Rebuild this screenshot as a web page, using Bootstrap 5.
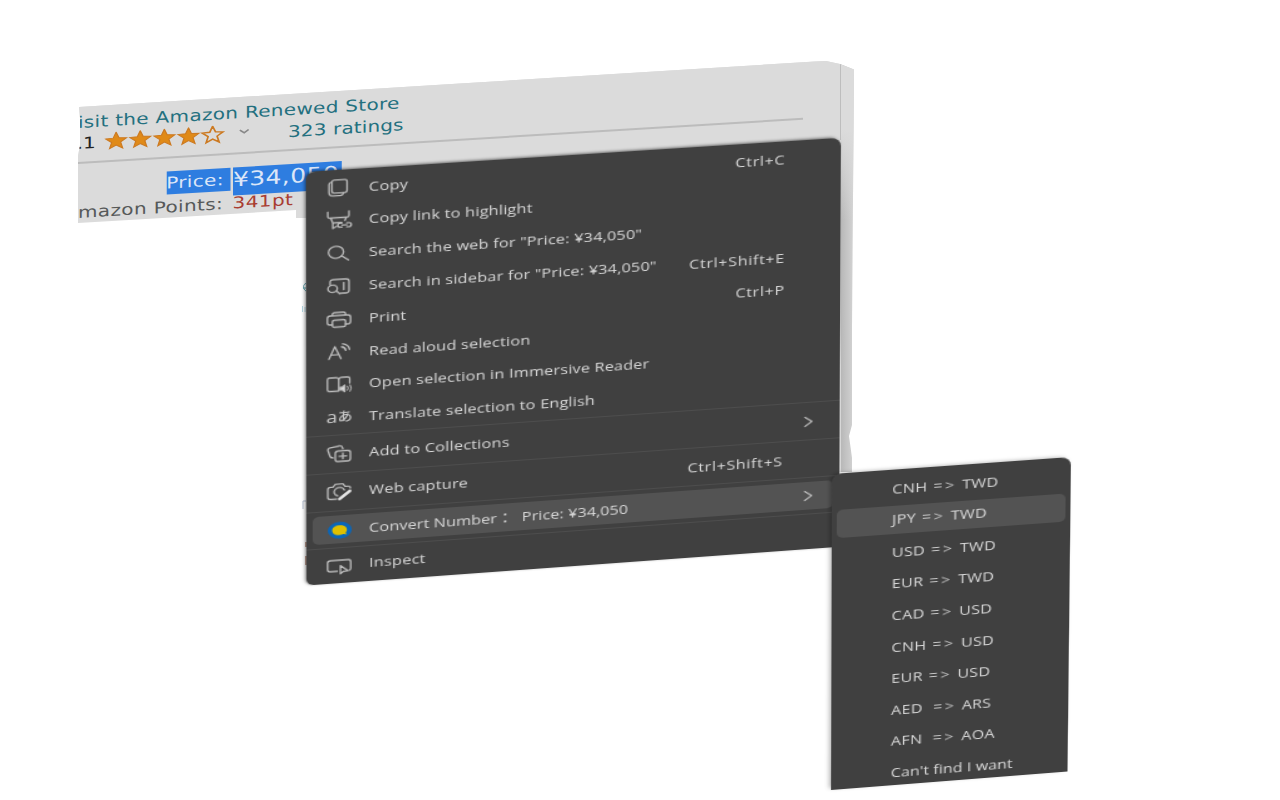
<!DOCTYPE html>
<html lang="en">
<head>
<meta charset="utf-8">
<meta name="viewport" content="width=device-width, initial-scale=1">
<title>Convert Number context menu</title>
<link href="https://cdn.jsdelivr.net/npm/bootstrap@5.3.0/dist/css/bootstrap.min.css" rel="stylesheet">
<style>
body{width:1280px;height:800px;overflow:hidden;background:#fff;font-family:"Open Sans","Noto Sans","Noto Sans CJK JP",sans-serif}
.stage{width:1280px;height:800px}
.sheet{inset:0;background:linear-gradient(#dbdbdb 130px,rgba(219,219,219,0) 220px),linear-gradient(90deg,transparent 841px,rgba(0,0,0,.16) 841px,rgba(0,0,0,.03) 854px),#dbdbdb;
 clip-path:polygon(79px 107px,460px 83.5px,815px 61.5px,826px 61px,840px 64px,854px 69.5px,852px 330px,852px 425px,849px 436px,852px 458px,852px 472px,800px 472px,800px 300px,310px 300px,310px 218px,296px 218px,296px 210px,78px 223px,78px 156px,80px 145px,80px 118px)}
.edge-line{left:840px;top:60px;width:1px;height:80px;background:#bdbdbd}
.tilted{transform-origin:0 0}
.product{left:78px;top:107px;width:582px;transform:matrix(1.25,-.07625,0,1,0,0);font:16px/22px "DejaVu Sans",sans-serif;color:#565959}
.teal{color:#23707f}
.line-store{height:26px;line-height:31px;letter-spacing:.24px}
.line-rate{height:22px}
.digit{margin-left:-1px;width:22px;color:#222}
.ratings{margin-left:31px;letter-spacing:.1px;padding-top:1px}
.rule{height:1.5px;background:#bcbcbc;width:580px;margin-top:7px}
.sel{background:#2e7de0;color:#dce6f8}
.line-price{margin-top:13.500px;height:29px}
.price-tag{width:51px;height:23px;margin-left:70.500px;line-height:24px;letter-spacing:.3px}
.price-val{width:87px;height:28px;margin-left:2.500px;line-height:25px;font-size:20px;letter-spacing:.3px}
.line-points{margin-top:-4px;letter-spacing:.3px}
.points{color:#a93d32;margin-left:7.500px}
.ctx{background:#404040;color:#d8d8d8;font-size:13px}
.ctx-main{left:306px;top:171.500px;width:428px;height:413px;border-radius:8px 8px 0 6px;padding-top:2px;box-shadow:-1.500px -1px 3px -.5px rgba(0,0,0,.5);
 transform:matrix3d(1.26433,-.080823,0,.00002675,.001216,1.00596,0,.00001147,0,0,1,0,0,0,0,1)}
.ctx-sub{left:832px;top:474px;width:192px;height:316px;border-radius:8px 8px 0 0;padding-top:2.800px;box-shadow:-2px -1px 4px -1px rgba(0,0,0,.35);
 transform:matrix3d(1.25151,-.08902,0,.000028104,-.003198,1.01066,0,.000033706,0,0,1,0,0,0,0,1)}
.item{height:32.800px;padding:0 45px 0 15.800px;white-space:pre}
.item svg{width:20px;height:20px;flex:none;fill:none;stroke:#bcbcbc;stroke-width:1.300;stroke-linejoin:round;stroke-linecap:round;overflow:visible;margin-top:-1.500px}
.item .caption{margin-left:14px;letter-spacing:.16px}
.item .keys{letter-spacing:.52px;padding-top:1px}
.item .keys-capture{margin-right:1px}
.item .chev{width:8px;height:12px;margin-right:-24px;margin-top:0}
.split{height:1px;background:#4d4d4d}
.tall{height:37px}
.lit{background:#535353;border-radius:5px;margin:4px 5px;height:28px;padding-left:10.800px;padding-right:40px}
.lit .caption{letter-spacing:.05px}
.ctx-sub .item{height:31.600px;padding:1.500px 0 0 48.300px;letter-spacing:.22px}
.ctx-sub .lit{height:27.600px;margin:2px 4px;padding:0 0 0 44.300px}
.arrow{letter-spacing:2px;margin:0 .7px 0 1.200px;color:#c6c6c6}
.ctx-sub .closing{letter-spacing:.05px}
.glyphs{width:20px;font-size:16px;line-height:20px;margin-top:-4px;color:#c8c8c8}
.kana{font:500 12px "Noto Sans CJK JP",sans-serif}
.scraps{left:300px;top:280px}
</style>
<script src="https://cdn.jsdelivr.net/npm/bootstrap@5.3.0/dist/js/bootstrap.bundle.min.js"></script>
</head>
<body>
<main class="stage position-relative">
 <section class="sheet position-absolute">
  <div class="edge-line position-absolute"></div>
  <div class="product tilted position-absolute text-nowrap">
   <div class="line-store teal">isit the Amazon Renewed Store</div>
   <div class="line-rate d-flex align-items-center"><span class="digit">.1</span>
    <svg width="98" height="20" viewBox="0 0 98 20" fill="#e08a18" stroke="#cc7a22" stroke-width="1">
     <defs><path id="star" d="M9.500.5l2.300 5.800 6 .4-4.700 3.900 1.600 6-5.200-3.300-5.200 3.300 1.600-6L1.200 6.700l6-.4z"/></defs>
     <use href="#star"/><use href="#star" x="19.300"/><use href="#star" x="38.600"/><use href="#star" x="57.900"/><use href="#star" x="77.200" fill="none" stroke-width="1.400"/>
    </svg>
    <svg width="10" height="8" viewBox="0 0 10 8" class="ms-2 mb-1" fill="none" stroke="#888" stroke-width="1.500"><path d="M2.500 2l3.500 3L9.500 2"/></svg>
    <span class="teal ratings">323 ratings</span>
   </div>
   <div class="rule"></div>
   <div class="line-price d-flex"><span class="sel price-tag">Price:</span><span class="sel price-val">¥34,050</span></div>
   <div class="line-points">mazon Points:<span class="points">341pt</span></div>
  </div>
 </section>
 <svg class="scraps position-absolute" width="8" height="300" fill="none"><path d="M6 3.500C3 4 2.500 9 6 11M3 8h3" style="stroke:#5aa0ac"/><path d="M2.500 26v6M5 27v5" style="stroke:#b4d8e4"/><path d="M3 229v-8h3" style="stroke:#b5bfd0"/><path d="M6 262v5M6 276v9" style="stroke:#8a4a30"/></svg>

 <nav class="ctx ctx-main tilted position-absolute" aria-label="Context menu">
  <div class="item d-flex align-items-center"><svg viewBox="0 0 20 20"><rect x="4.500" y="1.800" width="12" height="13" rx="2"/><path d="M4.400 3.500C2.700 4 2.200 4.800 2.200 6v8c0 2.400 1.200 3.600 3.500 3.600h5.500c1.300 0 2-.5 2.500-2.500"/></svg><span class="caption">Copy</span><span class="keys ms-auto">Ctrl+C</span></div>
  <div class="item d-flex align-items-center"><svg viewBox="0 0 20 20"><path d="M1.200 1.500V6c0 1 .5 1.500 1.500 1.500h14c1 0 1.300-.5 1.300-1.500V1.500M3.500 7.500l1.700 5h7M15.800 7.500l-1 3.200M5.200 12.500V18l3-2"/><path d="M12.500 13.200h-1.300a2 2 0 000 4h1.300M16.300 13.200h1.500a2 2 0 010 4h-1.500M12.500 15.200h3.800"/></svg><span class="caption">Copy link to highlight</span></div>
  <div class="item d-flex align-items-center"><svg viewBox="0 0 20 20"><circle cx="7.700" cy="8.800" r="6"/><path d="M12.200 12.800l5.400 4.500"/></svg><span class="caption">Search the web for "Price: ¥34,050"</span></div>
  <div class="item d-flex align-items-center"><svg viewBox="0 0 20 20"><path d="M3 8V5.500C3 3.700 3.800 3 5.500 3h10c1.800 0 2.500.8 2.500 2.500v9c0 1.800-.8 2.500-2.500 2.500h-4M13.800 6.500v7"/><circle cx="5" cy="12" r="3.700"/><path d="M8 14.500l2.800 3"/></svg><span class="caption">Search in sidebar for "Price: ¥34,050"</span><span class="keys ms-auto">Ctrl+Shift+E</span></div>
  <div class="item d-flex align-items-center"><svg viewBox="0 0 20 20"><path d="M4.800 15H3c-1.400 0-2.200-.8-2.200-2.200V8.500C.8 6.800 1.700 6 3.300 6h13.400c1.600 0 2.500.8 2.500 2.500v4.300c0 1.400-.8 2.200-2.200 2.200h-1.800M4.800 6V4.800c0-1.200.6-1.800 1.800-1.800h6.800c1.200 0 1.800.6 1.800 1.800V6"/><rect x="4.800" y="10.500" width="10.400" height="7" rx="1.600"/></svg><span class="caption">Print</span><span class="keys ms-auto">Ctrl+P</span></div>
  <div class="item d-flex align-items-center"><svg viewBox="0 0 20 20"><path d="M2 16.300L6.700 4l4.900 12.300M3.800 12.100h5.800M12 4.500c2 .5 3.200 1.800 3.400 3.900M12.800 1.700c3.300.7 5.200 2.700 5.600 6"/></svg><span class="caption">Read aloud selection</span></div>
  <div class="item d-flex align-items-center"><svg viewBox="0 0 20 20"><path d="M9.800 5v11.500M9.800 5C9.500 3.500 9 3 7.800 3H2.500C1.300 3 .8 3.500.8 4.700v10c0 1.200.6 1.800 1.700 1.800h7M9.800 5c.3-1.500.8-2 2-2h5c1.200 0 1.700.5 1.700 1.700v4.500"/><path fill="#e0e0e0" d="M10.800 13h1.500l2.200-2v6.500l-2.200-2h-1.500z"/><path stroke-width="1" d="M16.800 12.200q1.200 2 0 4M18.800 11q2 3.200 0 6.500"/></svg><span class="caption">Open selection in Immersive Reader</span></div>
  <div class="item d-flex align-items-center"><span class="glyphs d-flex align-items-center"><span>a</span><span class="kana">あ</span></span><span class="caption">Translate selection to English</span></div>
  <div class="split"></div>
  <div class="item tall d-flex align-items-center"><svg viewBox="0 0 20 20"><rect x="7" y="7.500" width="12" height="10.500" rx="2.200"/><path d="M13 10v5.500M10 12.800h6M5.200 14C3.500 14 3 13.500 2.700 12L1.200 6.500C.9 5 1.400 4.200 2.800 3.900L10 2.500c1.500-.3 2.200.2 2.600 1.600l.4 1.400"/></svg><span class="caption">Add to Collections</span><svg class="chev ms-auto" viewBox="0 0 8 12"><path d="M1 1.500l5.500 4.500L1 10.500"/></svg></div>
  <div class="split"></div>
  <div class="item tall d-flex align-items-center"><svg viewBox="0 0 20 20"><path d="M8 17.500H3.200C1.700 17.500 1 16.800 1 15.300V7.500C1 6 1.700 5.300 3.200 5.300h2L7 2.700h6l1.800 2.600h2c1.500 0 2.200.7 2.200 2"/><path d="M9 14.300A4.200 4.200 0 1114.200 9"/><path d="M10.500 17.500l8-7.200" stroke="#e4e4e4" stroke-width="2.800"/></svg><span class="caption">Web capture</span><span class="keys keys-capture ms-auto">Ctrl+Shift+S</span></div>
  <div class="split"></div>
  <div class="item lit d-flex align-items-center"><svg viewBox="0 0 20 20"><g stroke="none"><ellipse cx="10.500" cy="11" rx="9.500" ry="8.500" fill="#0a66b8"/><path fill="#dfc000" d="M10.200 6c3.500 0 6 1.800 6 4.800 0 1.400-.5 2.200-1 2.900l.8 1.700-2.500-.3c-1 .5-2 .7-3.300.7-3.500 0-5.700-2-5.700-5s2.200-4.800 5.700-4.800z"/></g></svg><span class="caption">Convert Number：  Price: ¥34,050</span><svg class="chev ms-auto" viewBox="0 0 8 12"><path d="M1 1.500l5.500 4.500L1 10.500"/></svg></div>
  <div class="split"></div>
  <div class="item d-flex align-items-center"><svg viewBox="0 0 20 20"><path d="M8.500 17H3c-1.500 0-2.200-.7-2.200-2.200V8.200C.8 6.700 1.500 6 3 6h14c1.500 0 2.200.7 2.200 2.200v6.600c0 1.200-.4 1.800-1.200 2.100"/><path d="M11 11.500v8.300l2.300-2.300 3.700-.4z"/></svg><span class="caption">Inspect</span></div>
 </nav>

 <nav class="ctx ctx-sub tilted position-absolute" aria-label="Currency conversions">
  <div class="item d-flex align-items-center">CNH <span class="arrow">=&gt;</span> TWD</div>
  <div class="item lit d-flex align-items-center">JPY <span class="arrow">=&gt;</span> TWD</div>
  <div class="item d-flex align-items-center">USD <span class="arrow">=&gt;</span> TWD</div>
  <div class="item d-flex align-items-center">EUR <span class="arrow">=&gt;</span> TWD</div>
  <div class="item d-flex align-items-center">CAD <span class="arrow">=&gt;</span> USD</div>
  <div class="item d-flex align-items-center">CNH <span class="arrow">=&gt;</span> USD</div>
  <div class="item d-flex align-items-center">EUR <span class="arrow">=&gt;</span> USD</div>
  <div class="item d-flex align-items-center">AED  <span class="arrow">=&gt;</span> ARS</div>
  <div class="item d-flex align-items-center">AFN  <span class="arrow">=&gt;</span> AOA</div>
  <div class="item closing d-flex align-items-center">Can't find I want</div>
 </nav>
</main>
</body>
</html>
